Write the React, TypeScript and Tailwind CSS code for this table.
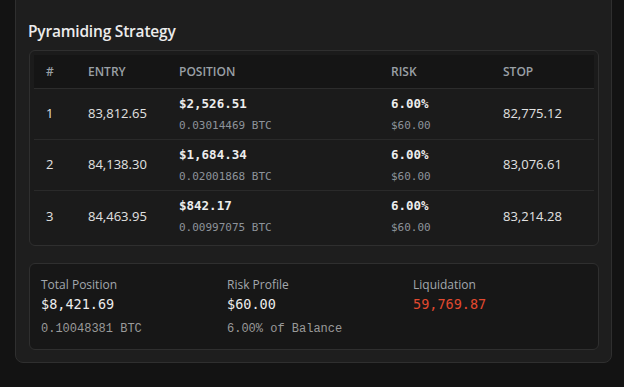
import React from "react";

const ROWS = [
  { n: 1, entry: "83,812.65", usd: "$2,526.51", btc: "0.03014469 BTC", risk: "6.00%", riskUsd: "$60.00", stop: "82,775.12" },
  { n: 2, entry: "84,138.30", usd: "$1,684.34", btc: "0.02001868 BTC", risk: "6.00%", riskUsd: "$60.00", stop: "83,076.61" },
  { n: 3, entry: "84,463.95", usd: "$842.17", btc: "0.00997075 BTC", risk: "6.00%", riskUsd: "$60.00", stop: "83,214.28" },
];

const SANS = "font-['Open_Sans',sans-serif]";
const MONO = "font-['DejaVu_Sans_Mono',monospace]";
const COURIER = "font-['Liberation_Mono',monospace]";
const COLS = "grid grid-cols-[42px_91px_212px_112px_1fr]";

export default function App() {
  return (
    <div className={`w-[624px] h-[387px] overflow-hidden bg-[#131313] pl-[15px] pr-[12px] ${SANS}`}>
      <div className="-mt-[12px] bg-[#1e1e1e] border border-[#2f2f2f] rounded-[8px] px-[12px] pt-[31px] pb-[12px]">
        {/* Title */}
        <h2 className="text-[15.5px] font-semibold text-[#ececec] leading-[22px] tracking-[-0.2px]">Pyramiding Strategy</h2>

        {/* Table */}
        <div className="mt-[8px] ml-[1px] border border-[#2f2f2f] rounded-[6px] bg-[#1b1b1b] p-[4px] pb-[3px]">
          <div className={`${COLS} h-[34px] items-center bg-[#151515] border-b border-[#2c2c2c] text-[12px] font-semibold text-[#9aa0a6]`}>
            <div className="pl-[12px]">#</div>
            <div className="pl-[12px]">ENTRY</div>
            <div className="pl-[12px]">POSITION</div>
            <div className="pl-[12px]">RISK</div>
            <div className="pl-[12px]">STOP</div>
          </div>
          {ROWS.map((r, i) => (
            <div
              key={r.n}
              className={`${COLS} h-[51px] items-center text-[13px] text-[#e2e2e2] ${i < ROWS.length - 1 ? "border-b border-[#2a2a2a]" : ""}`}
            >
              <div className="pl-[12px]">{r.n}</div>
              <div className="pl-[12px]">{r.entry}</div>
              <div className="pl-[12px] flex flex-col">
                <span className={`${MONO} text-[12.5px] font-semibold text-[#ededed] leading-[18px]`}>{r.usd}</span>
                <span className={`${MONO} text-[11px] text-[#8d939a] leading-[16px] mt-[5px]`}>{r.btc}</span>
              </div>
              <div className="pl-[12px] flex flex-col">
                <span className={`${MONO} text-[12.5px] font-semibold text-[#ededed] leading-[18px]`}>{r.risk}</span>
                <span className={`${MONO} text-[11px] text-[#8d939a] leading-[16px] mt-[5px]`}>{r.riskUsd}</span>
              </div>
              <div className="pl-[12px]">{r.stop}</div>
            </div>
          ))}
        </div>

        {/* Summary */}
        <div className="mt-[17px] ml-[1px] border border-[#2f2f2f] rounded-[6px] bg-[#171717] pl-[11px] pt-[12px] pb-[12px] grid grid-cols-[186px_186px_1fr]">
          <div className="flex flex-col">
            <span className="text-[12px] text-[#a3a8ae] leading-[17px]">Total Position</span>
            <span className={`${MONO} text-[13.5px] text-[#ededed] leading-[20px] mt-[1px]`}>$8,421.69</span>
            <span className={`${COURIER} text-[12px] text-[#9a9a9a] leading-[16px] mt-[7px]`}>0.10048381 BTC</span>
          </div>
          <div className="flex flex-col">
            <span className="text-[12px] text-[#a3a8ae] leading-[17px]">Risk Profile</span>
            <span className={`${MONO} text-[13.5px] text-[#ededed] leading-[20px] mt-[1px]`}>$60.00</span>
            <span className={`${COURIER} text-[12px] text-[#9a9a9a] leading-[16px] mt-[7px]`}>6.00% of Balance</span>
          </div>
          <div className="flex flex-col">
            <span className="text-[12px] text-[#a3a8ae] leading-[17px]">Liquidation</span>
            <span className={`${MONO} text-[13.5px] text-[#e2492f] leading-[20px] mt-[1px]`}>59,769.87</span>
          </div>
        </div>
      </div>
    </div>
  );
}
